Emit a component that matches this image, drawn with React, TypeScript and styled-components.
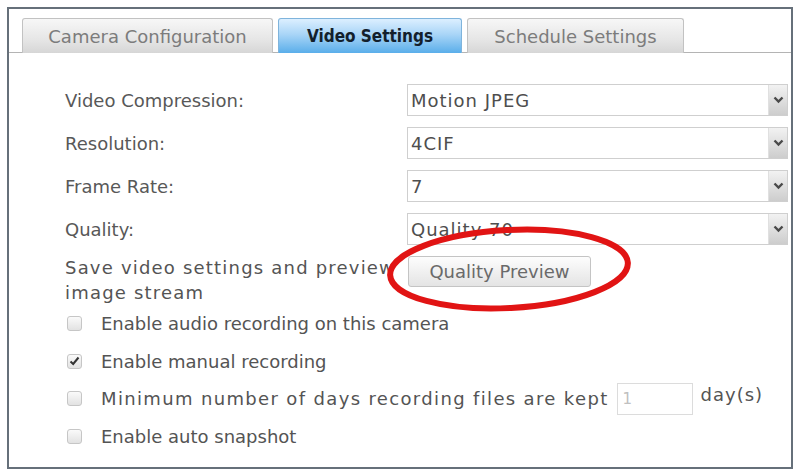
import { Fragment } from 'react';
import styled, { createGlobalStyle } from 'styled-components';

const GlobalStyle = createGlobalStyle`
    html, body {
        margin: 0;
        padding: 0;
        background: #fff;
    }
    body {
        font-family: "DejaVu Sans", Verdana, sans-serif;
        color: #555;
    }
`;

const Cadre = styled.div`
    position: relative;
    box-sizing: border-box;
    margin: 7px 0 0 7px;
    width: 786px;
    height: 462px;
    border: 2px solid #66707a;
    background: #fff;
`;

const Onglets = styled.div`
    display: flex;
    align-items: flex-end;
    gap: 5px;
    padding: 9px 0 0 13px;
    border-bottom: 1px solid #b4b4b4;
`;

const Onglet = styled.div<{ $actif: boolean }>`
    box-sizing: border-box;
    height: 35px;
    margin-bottom: -1px;
    display: flex;
    align-items: center;
    justify-content: center;
    font-size: 18px;
    border: 1px solid #c2c2c2;
    border-bottom: none;
    border-radius: 3px 3px 0 0;

    ${({ $actif }) => $actif
        ? `
            color: #13202c;
            font-family: "DejaVu Sans Condensed", "DejaVu Sans", sans-serif;
            font-weight: 700;
            font-size: 17px;
            background: linear-gradient(#dcefff 0%, #a9d5f7 45%, #5aaeea 100%);
            border-color: #7fb4dc;
        `
        : `
            color: #7c7c7c;
            background: linear-gradient(#f7f7f7 0%, #e6e6e6 60%, #d6d6d6 100%);
        `}
`;

const Corps = styled.div`
    padding: 31px 3px 0 56px;
    font-size: 18px;
`;

const Grille = styled.div`
    display: grid;
    grid-template-columns: 342px 1fr;
    row-gap: 11px;
    align-items: center;
`;

const Libelle = styled.div`
    color: #585858;
`;

const Liste = styled.div`
    box-sizing: border-box;
    height: 32px;
    display: flex;
    align-items: stretch;
    border: 1px solid #cfcfcf;
    background: #fff;
`;

const Valeur = styled.div`
    flex: 1;
    display: flex;
    align-items: center;
    padding-left: 3px;
    color: #4e4e4e;
    letter-spacing: 1px;
`;

const Fleche = styled.div`
    width: 18px;
    display: flex;
    align-items: center;
    justify-content: center;
    border-left: 1px solid #e0e0e0;
    background: linear-gradient(#f2f2f2, #cdcdcd);
`;

const LigneApercu = styled.div`
    display: grid;
    grid-template-columns: 342px auto;
    align-items: start;
    margin-top: 11px;
`;

const TexteApercu = styled.div`
    line-height: 25px;
    letter-spacing: 1.2px;
    color: #545454;
    white-space: nowrap;
    margin-top: -1px;
`;

const BoutonApercu = styled.button`
    box-sizing: border-box;
    width: 183px;
    height: 31px;
    margin-left: 1px;
    font-family: "DejaVu Sans", Verdana, sans-serif;
    font-size: 18px;
    color: #6a6a6a;
    border: 1px solid #c4c4c4;
    border-radius: 3px;
    background: linear-gradient(#fdfdfd, #e4e4e4);
    padding: 0;
`;

const Cases = styled.div`
    display: flex;
    flex-direction: column;
`;

const LigneCase = styled.div`
    height: 37.5px;
    display: flex;
    align-items: center;
    color: #545454;
`;

const Case = styled.span`
    box-sizing: border-box;
    width: 15px;
    height: 15px;
    margin: 0 19px 0 2px;
    display: inline-flex;
    align-items: center;
    justify-content: center;
    border: 1px solid #c6c6c6;
    border-radius: 3px;
    background: linear-gradient(#fafafa, #e2e2e2);
`;

const TexteEspace = styled.span`
    letter-spacing: 1.35px;
`;

const ChampJours = styled.div`
    box-sizing: border-box;
    width: 76px;
    height: 32px;
    margin: 0 8px 0 8px;
    padding-left: 5px;
    display: flex;
    align-items: center;
    border: 1px solid #dcdcdc;
    color: #c0c0c0;
    font-size: 15px;
`;

const Unite = styled.span`
    margin-top: -8px;
    letter-spacing: 1px;
`;

const Entoure = styled.svg`
    position: absolute;
    left: 362px;
    top: 210px;
    pointer-events: none;
`;

const Chevron = () => (
    <svg width="11" height="8" viewBox="0 0 11 8">
        <path d="M1.5 1.5 L5.5 5.5 L9.5 1.5" fill="none" stroke="#4a4a4a" strokeWidth="2.4" />
    </svg>
);

const Coche = () => (
    <svg width="11" height="10" viewBox="0 0 11 10">
        <path d="M1.5 5.5 L4.2 8 L9.5 1.5" fill="none" stroke="#333" strokeWidth="2" />
    </svg>
);

const onglets = ['Camera Configuration', 'Video Settings', 'Schedule Settings'];
const largeurs = [251, 184, 217];

const champs = [
    { libelle: 'Video Compression:', valeur: 'Motion JPEG' },
    { libelle: 'Resolution:', valeur: '4CIF' },
    { libelle: 'Frame Rate:', valeur: '7' },
    { libelle: 'Quality:', valeur: 'Quality 70' },
];

const App = () => (
    <>
        <GlobalStyle />
        <Cadre>
            <Onglets>
                {onglets.map((nom, i) => (
                    <Onglet key={nom} $actif={i === 1} style={{ width: largeurs[i] }}>
                        {nom}
                    </Onglet>
                ))}
            </Onglets>
            <Corps>
                <Grille>
                    {champs.map((c) => (
                        <Fragment key={c.libelle}>
                            <Libelle>{c.libelle}</Libelle>
                            <Liste>
                                <Valeur>{c.valeur}</Valeur>
                                <Fleche><Chevron /></Fleche>
                            </Liste>
                        </Fragment>
                    ))}
                </Grille>
                <LigneApercu>
                    <TexteApercu>
                        Save video settings and preview<br />image stream
                    </TexteApercu>
                    <BoutonApercu>Quality Preview</BoutonApercu>
                </LigneApercu>
                <Cases>
                    <LigneCase>
                        <Case />Enable audio recording on this camera
                    </LigneCase>
                    <LigneCase>
                        <Case><Coche /></Case>Enable manual recording
                    </LigneCase>
                    <LigneCase>
                        <Case />
                        <TexteEspace>Minimum number of days recording files are kept</TexteEspace>
                        <ChampJours>1</ChampJours>
                        <Unite>day(s)</Unite>
                    </LigneCase>
                    <LigneCase>
                        <Case />Enable auto snapshot
                    </LigneCase>
                </Cases>
            </Corps>
            <Entoure width="280" height="100" viewBox="0 0 280 100">
                <ellipse
                    cx="138"
                    cy="50"
                    rx="119"
                    ry="39"
                    fill="none"
                    stroke="#e11414"
                    strokeWidth="6"
                    transform="rotate(-3 138 50)"
                />
            </Entoure>
        </Cadre>
    </>
);

export default App;
